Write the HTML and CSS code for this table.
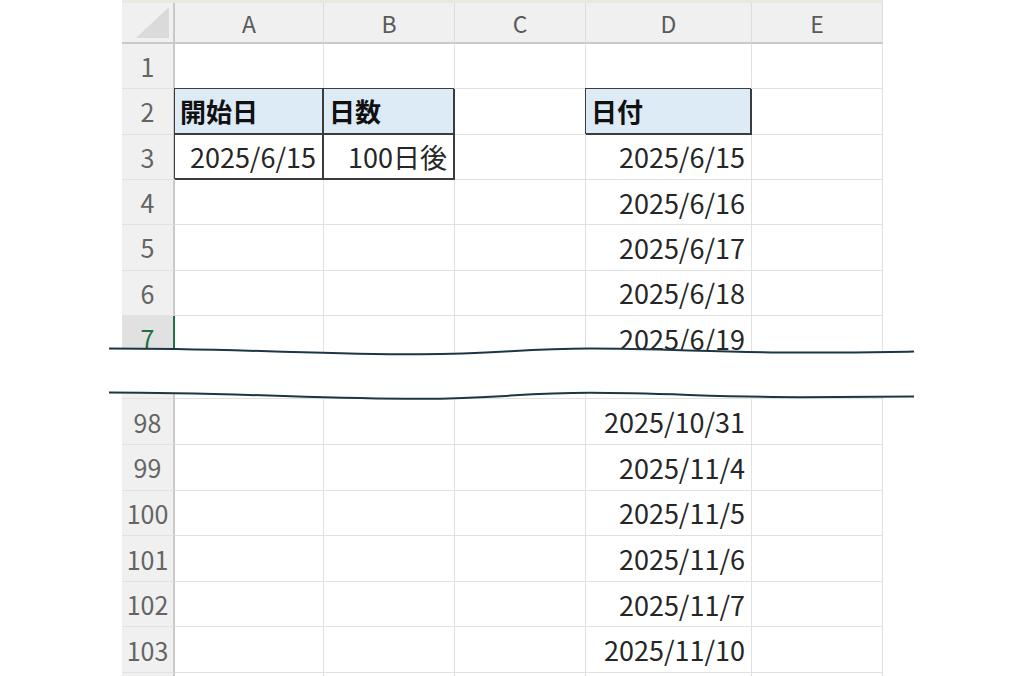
FILE: index.html
```html
<!DOCTYPE html>
<html lang="ja">
<head>
<meta charset="utf-8">
<title>Sheet</title>
<link rel="stylesheet" href="styles.css">
</head>
<body>
<div class="page">
  <div class="sheet">
    <div class="corner"><span class="tri"></span></div>
    <div class="ch">A</div><div class="ch">B</div><div class="ch">C</div><div class="ch">D</div><div class="ch">E</div>

    <div class="rh">1</div><div class="c"></div><div class="c"></div><div class="c"></div><div class="c"></div><div class="c"></div>
    <div class="rh">2</div><div class="c hd bx">開始日</div><div class="c hd bx">日数</div><div class="c"></div><div class="c hd bx">日付</div><div class="c"></div>
    <div class="rh">3</div><div class="c r bx">2025/6/15</div><div class="c r bx">100日後</div><div class="c"></div><div class="c r">2025/6/15</div><div class="c"></div>
    <div class="rh">4</div><div class="c"></div><div class="c"></div><div class="c"></div><div class="c r">2025/6/16</div><div class="c"></div>
    <div class="rh">5</div><div class="c"></div><div class="c"></div><div class="c"></div><div class="c r">2025/6/17</div><div class="c"></div>
    <div class="rh">6</div><div class="c"></div><div class="c"></div><div class="c"></div><div class="c r">2025/6/18</div><div class="c"></div>
    <div class="rh sel">7</div><div class="c"></div><div class="c"></div><div class="c"></div><div class="c r">2025/6/19</div><div class="c"></div>
    <div class="rh"></div><div class="c"></div><div class="c"></div><div class="c"></div><div class="c"></div><div class="c"></div>
    <div class="rh">98</div><div class="c"></div><div class="c"></div><div class="c"></div><div class="c r">2025/10/31</div><div class="c"></div>
    <div class="rh">99</div><div class="c"></div><div class="c"></div><div class="c"></div><div class="c r">2025/11/4</div><div class="c"></div>
    <div class="rh">100</div><div class="c"></div><div class="c"></div><div class="c"></div><div class="c r">2025/11/5</div><div class="c"></div>
    <div class="rh">101</div><div class="c"></div><div class="c"></div><div class="c"></div><div class="c r">2025/11/6</div><div class="c"></div>
    <div class="rh">102</div><div class="c"></div><div class="c"></div><div class="c"></div><div class="c r">2025/11/7</div><div class="c"></div>
    <div class="rh">103</div><div class="c"></div><div class="c"></div><div class="c"></div><div class="c r">2025/11/10</div><div class="c"></div>
    <div class="rh"></div><div class="c"></div><div class="c"></div><div class="c"></div><div class="c"></div><div class="c"></div>
  </div>
  <svg class="cut" width="1024" height="676" viewBox="0 0 1024 676">
    <path class="band" d="M109,348.5 C240,348.5 320,354.5 420,354.2 C500,354 520,348.5 590,348.5 C660,348.5 720,352.5 800,352.6 C860,352.6 890,352 914,351.6 L914,396.6 C890,396.6 860,397.2 800,397.2 C720,397.1 660,392.8 590,392.8 C520,392.8 500,398.6 420,398.8 C320,399 240,392.6 109,392.6 Z"/>
    <path class="wave" d="M109,348.5 C240,348.5 320,354.5 420,354.2 C500,354 520,348.5 590,348.5 C660,348.5 720,352.5 800,352.6 C860,352.6 890,352 914,351.6"/>
    <path class="wave" d="M109,392.6 C240,392.6 320,399 420,398.8 C500,398.6 520,392.8 590,392.8 C660,392.8 720,397.1 800,397.2 C860,397.2 890,396.6 914,396.6"/>
  </svg>
</div>
</body>
</html>
```

FILE: styles.css
```css
html, body {
  margin: 0;
  background: #ffffff;
}

.page {
  position: relative;
  width: 1024px;
  height: 676px;
  overflow: hidden;
  background: #ffffff;
  font-family: "Noto Sans CJK JP", "Noto Sans", sans-serif;
}

.sheet {
  margin-left: 122px;
  width: 761px;
  display: grid;
  grid-template-columns: 53px 149px 131px 131px 166px 131px;
  grid-template-rows: 41px repeat(7, 45.33px) 38.2px repeat(6, 45.6px) 20px;
  border-top: 3px solid #e8eae0;
}

.corner {
  background: #f0f0f0;
  border-right: 2px solid #c9c9c9;
  border-bottom: 2px solid #c9c9c9;
  display: flex;
  align-items: flex-end;
  justify-content: flex-end;
  padding: 0 4px 4px 0;
  box-sizing: border-box;
}

.tri {
  width: 33px;
  height: 31px;
  background: #dadada;
  clip-path: polygon(100% 0, 100% 100%, 0 100%);
}

.ch {
  background: #f0f0f0;
  border-right: 1px solid #dcdcdc;
  border-bottom: 2px solid #c9c9c9;
  color: #5a5a5a;
  font-size: 23px;
  display: flex;
  align-items: center;
  justify-content: center;
  box-sizing: border-box;
}

.rh {
  background: #f0f0f0;
  border-right: 2px solid #c9c9c9;
  border-bottom: 1px solid #e2e2e2;
  color: #646464;
  font-size: 25px;
  display: flex;
  align-items: center;
  justify-content: center;
  box-sizing: border-box;
}

.rh.sel {
  background: #e1e1e1;
  color: #1e7145;
  border-right-color: #217346;
}

.c {
  border-right: 1px solid #e1e1e1;
  border-bottom: 1px solid #e1e1e1;
  display: flex;
  align-items: center;
  padding: 0 6px;
  box-sizing: border-box;
  font-size: 27px;
  color: #262626;
  white-space: nowrap;
}

.r {
  justify-content: flex-end;
}

.hd {
  background: #ddebf7;
  font-weight: 700;
  font-size: 26px;
  color: #111111;
  padding-left: 5px;
}

.bx {
  border-right: 2px solid #3c3c3c;
  border-bottom: 2px solid #3c3c3c;
  box-shadow: -1px -1px 0 #3c3c3c;
}

.cut {
  position: absolute;
  left: 0;
  top: 0;
  pointer-events: none;
}

.band {
  fill: #ffffff;
}

.wave {
  fill: none;
  stroke: #1d3646;
  stroke-width: 2;
}
```
